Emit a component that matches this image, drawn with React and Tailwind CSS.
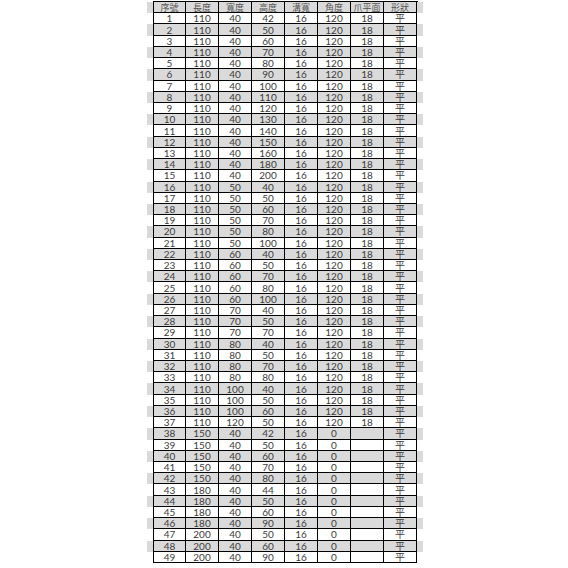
import React from "react";

const headers = ["序號", "長度", "寬度", "高度", "溝寬", "角度", "爪平面", "形狀"];

// [長度, 寬度, 高度]
const dims = [
  [110, 40, 42], [110, 40, 50], [110, 40, 60], [110, 40, 70], [110, 40, 80],
  [110, 40, 90], [110, 40, 100], [110, 40, 110], [110, 40, 120], [110, 40, 130],
  [110, 40, 140], [110, 40, 150], [110, 40, 160], [110, 40, 180], [110, 40, 200],
  [110, 50, 40], [110, 50, 50], [110, 50, 60], [110, 50, 70], [110, 50, 80],
  [110, 50, 100], [110, 60, 40], [110, 60, 50], [110, 60, 70], [110, 60, 80],
  [110, 60, 100], [110, 70, 40], [110, 70, 50], [110, 70, 70], [110, 80, 40],
  [110, 80, 50], [110, 80, 70], [110, 80, 80], [110, 100, 40], [110, 100, 50],
  [110, 100, 60], [110, 120, 50], [150, 40, 42], [150, 40, 50], [150, 40, 60],
  [150, 40, 70], [150, 40, 80], [180, 40, 44], [180, 40, 50], [180, 40, 60],
  [180, 40, 90], [200, 40, 50], [200, 40, 60], [200, 40, 90],
];

const rows = dims.map((d, i) => {
  const n = i + 1;
  const old = n <= 37;
  return [n, d[0], d[1], d[2], 16, old ? 120 : 0, old ? 18 : "", "平"];
});

const Cell = ({ children, first, head }) => (
  <div
    className={
      "w-[33px] h-full flex items-center justify-center border-r border-b border-black leading-none " +
      (first ? "border-l " : "") +
      (head ? "text-[9px] text-[#555]" : "text-[10px] text-[#3c3c3c]")
    }
  >
    {children}
  </div>
);

const Row = ({ cells, gray, head }) => (
  <div className={"flex h-[11.22px] pl-[6px] pr-[5px] " + (gray ? "bg-[#dadada]" : "bg-white")}>
    {cells.map((c, j) => (
      <Cell key={j} first={j === 0} head={head}>
        {c}
      </Cell>
    ))}
  </div>
);

export default function App() {
  return (
    <div
      className="w-[568px] h-[568px] bg-white pt-[1px]"
      style={{ fontFamily: "Lato, 'Noto Sans CJK TC', sans-serif" }}
    >
      <div className="ml-[147px] w-[276px]">
        <div className="ml-[6px] w-[265px] border-t border-black h-0" />
        <Row cells={headers} gray head />
        {rows.map((r, i) => (
          <Row key={i} cells={r} gray={i % 2 === 1} />
        ))}
      </div>
    </div>
  );
}
